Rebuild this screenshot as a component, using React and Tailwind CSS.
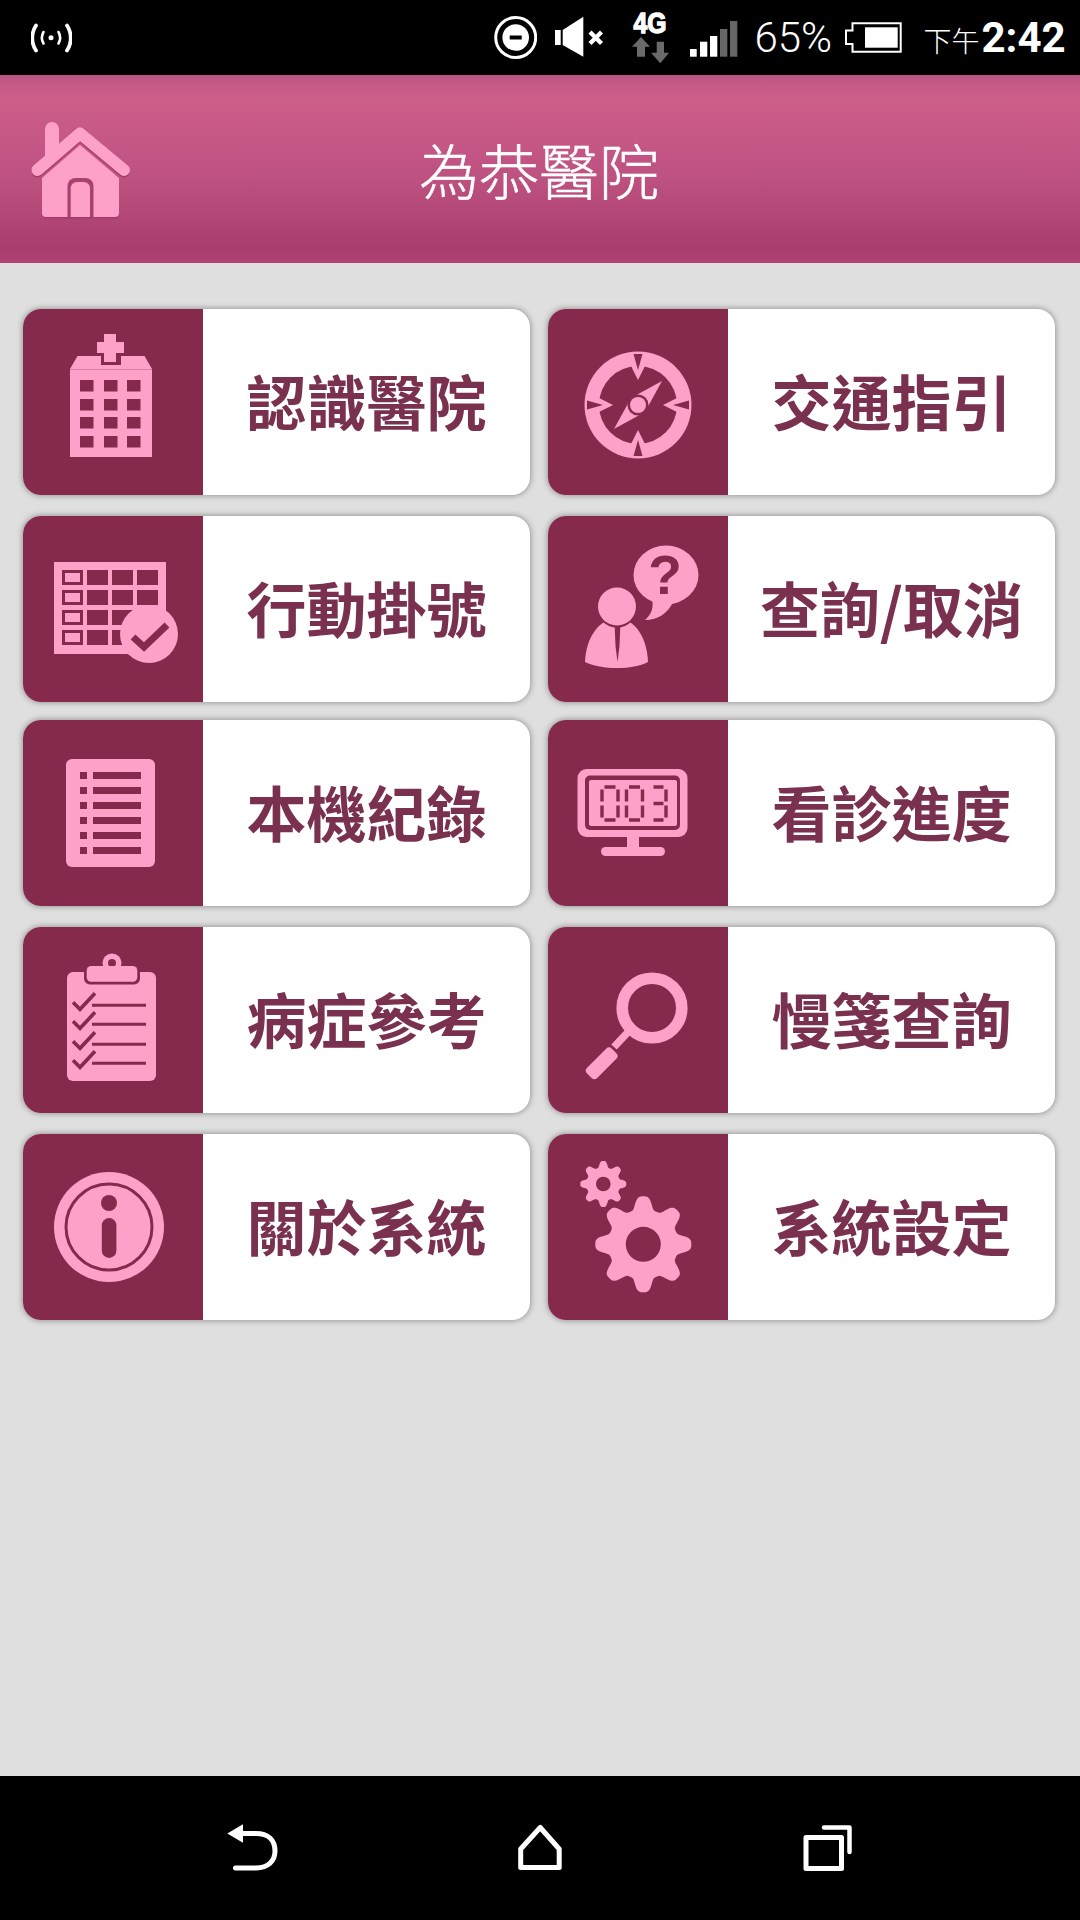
import React from "react";

const PINK = "#fda1c8";
const DARK = "#85294d";

function gearPath(cx, cy, R, hole) {
  const pts = [];
  const n = 240;
  for (let i = 0; i < n; i++) {
    const t = (i / n) * Math.PI * 2;
    const c = (1 + Math.cos(8 * t)) / 2;
    const b = c * c * (3 - 2 * c);
    const r = R * (0.73 + 0.27 * b);
    pts.push(`${(cx + r * Math.sin(t)).toFixed(2)} ${(cy - r * Math.cos(t)).toFixed(2)}`);
  }
  const h = `M${cx - hole} ${cy}a${hole} ${hole} 0 1 0 ${hole * 2} 0a${hole} ${hole} 0 1 0 ${-hole * 2} 0Z`;
  return `M${pts.join("L")}Z${h}`;
}

function Panel({ children }) {
  return (
    <svg viewBox="0 0 180 186" className="block h-[186px] w-[180px] shrink-0" aria-hidden="true">
      {children}
    </svg>
  );
}

function Hospital() {
  const xs = [57, 81, 104];
  const ys = [71, 90, 108, 127];
  return (
    <Panel>
      <rect x="47" y="60" width="82" height="88" fill={PINK} />
      <path d="M47 60 L54.5 47 H121.5 L129 60Z" fill={PINK} />
      <rect x="47" y="60" width="82" height="1" fill="#d67fa5" />
      <rect x="78" y="44" width="20" height="12" fill={DARK} />
      <path d="M81 25H93V33H101V44H93V53H81V44H74V33H81Z" fill={PINK} />
      {ys.map((y) => xs.map((x) => <rect key={`${x}-${y}`} x={x} y={y} width="13.5" height="11.5" fill={DARK} />))}
    </Panel>
  );
}

function Calendar() {
  const rows = [54, 74, 94, 114];
  return (
    <Panel>
      <rect x="31" y="46" width="112" height="92" fill={PINK} />
      {rows.map((y) => (
        <g key={y}>
          <rect x="40.5" y={y + 1.5} width="18" height="12" fill={PINK} stroke={DARK} strokeWidth="3" />
          {[64, 89, 114].map((x) => (
            <rect key={x} x={x} y={y} width="21" height="15" fill={DARK} />
          ))}
        </g>
      ))}
      <ellipse cx="126" cy="118" rx="29" ry="29" fill={PINK} />
      <path d="M110 121L121 131L144 109" fill="none" stroke={DARK} strokeWidth="7" />
    </Panel>
  );
}

function Compass() {
  return (
    <Panel>
      <circle cx="90" cy="96" r="53.5" fill={PINK} />
      <circle cx="90" cy="96" r="39" fill={DARK} />
      {[0, 90, 180, 270].map((a) => (
        <g key={a} transform={`rotate(${a} 90 96)`}>
          <path d="M81 53L99 53L90 71Z" fill={PINK} />
          <path d="M85.5 45L94.5 45L90 61Z" fill={DARK} />
        </g>
      ))}
      <path d="M114 72L97 103L66 120L83 89Z" fill={PINK} />
      <circle cx="90" cy="96" r="10.5" fill={DARK} />
      <circle cx="90" cy="96" r="8" fill={PINK} />
    </Panel>
  );
}

function PersonQuestion() {
  return (
    <Panel>
      <ellipse cx="118" cy="59" rx="32.5" ry="29.5" fill={PINK} />
      <path d="M104 82C106 92 103 99 97 104C110 104 120 97 125 86Z" fill={PINK} />
      <text x="117" y="78" textAnchor="middle" fontSize="55" fontWeight="700" fill={DARK} fontFamily="'Liberation Sans', sans-serif">?</text>
      <path d="M69 101C50 104 38 122 37 146C46 150 57 152 69 152C81 152 92 150 100 146C99 122 88 104 69 101Z" fill={PINK} />
      <path d="M66.4 104H72.6L71.5 130L69.5 146L67.5 130Z" fill={DARK} />
      <circle cx="69" cy="90.5" r="21" fill={DARK} />
      <circle cx="69" cy="90.5" r="19" fill={PINK} />
    </Panel>
  );
}

function ListDoc() {
  return (
    <Panel>
      <rect x="43" y="39" width="89" height="108" rx="6" fill={PINK} />
      {[52, 67, 82, 97, 112, 127].map((y) => (
        <g key={y} fill={DARK}>
          <rect x="57" y={y} width="7" height="7" />
          <rect x="70" y={y} width="48" height="7" />
        </g>
      ))}
    </Panel>
  );
}

function Monitor() {
  const seg = (x, y, w, h, on) => {
    const s = [];
    if (on.includes("t")) s.push(`M${x + 2.5} ${y}H${x + w - 2.5}`);
    if (on.includes("m")) s.push(`M${x + 2.5} ${y + h / 2}H${x + w - 2.5}`);
    if (on.includes("b")) s.push(`M${x + 2.5} ${y + h}H${x + w - 2.5}`);
    if (on.includes("a")) s.push(`M${x} ${y + 2.5}V${y + h / 2 - 2}`);
    if (on.includes("c")) s.push(`M${x} ${y + h / 2 + 2}V${y + h - 2.5}`);
    if (on.includes("d")) s.push(`M${x + w} ${y + 2.5}V${y + h / 2 - 2}`);
    if (on.includes("e")) s.push(`M${x + w} ${y + h / 2 + 2}V${y + h - 2.5}`);
    return s.join("");
  };
  return (
    <Panel>
      <rect x="29.5" y="49" width="110" height="68" rx="9" fill={PINK} />
      <rect x="37" y="55.5" width="95" height="54.5" rx="5" fill={DARK} />
      <rect x="41" y="60" width="88" height="46" rx="2" fill={PINK} />
      <path
        d={seg(54, 67, 16, 33, "tbacde") + seg(78.5, 67, 16, 33, "tbacde") + seg(103, 67, 15, 33, "tmbde")}
        fill="none"
        stroke={DARK}
        strokeWidth="3.4"
      />
      <rect x="79" y="117" width="12" height="11" fill={PINK} />
      <rect x="53" y="127" width="64" height="9" rx="4.5" fill={PINK} />
    </Panel>
  );
}

function Clipboard() {
  const lines = [78.3, 97.3, 117.3, 136.3];
  return (
    <Panel>
      <circle cx="89" cy="36" r="9.5" fill={PINK} />
      <circle cx="89" cy="36" r="4" fill={DARK} />
      <rect x="44" y="45" width="89" height="109" rx="6" fill={PINK} />
      <rect x="61" y="39" width="56" height="18.5" rx="6" fill={DARK} />
      <rect x="63.7" y="39" width="50.6" height="15.7" rx="4.5" fill={PINK} />
      {lines.map((y) => (
        <g key={y} fill="none" stroke={DARK}>
          <path d={`M69 ${y}H123`} strokeWidth="3" />
          <path d={`M50 ${y - 3}L57 ${y + 4}L72 ${y - 12}`} strokeWidth="3.6" />
        </g>
      ))}
    </Panel>
  );
}

function Magnifier() {
  return (
    <Panel>
      <circle cx="104" cy="81" r="29.8" fill="none" stroke={PINK} strokeWidth="11.6" />
      <path d="M82 103L66 120" stroke={PINK} strokeWidth="7.5" />
      <rect x="36.2" y="129.1" width="35" height="14.4" rx="4" fill={PINK} transform="rotate(-45 53.7 136.3)" />
    </Panel>
  );
}

function Info() {
  return (
    <Panel>
      <circle cx="86" cy="93" r="55" fill={PINK} />
      <circle cx="86" cy="93" r="43" fill="none" stroke={DARK} strokeWidth="3" />
      <ellipse cx="86" cy="69" rx="8" ry="8" fill={DARK} />
      <rect x="78.8" y="84" width="14.6" height="40" rx="7.3" fill={DARK} />
    </Panel>
  );
}

function Gears() {
  return (
    <Panel>
      <path d={gearPath(55.3, 50, 23, 7.3)} fill={PINK} fillRule="evenodd" />
      <path d={gearPath(95.3, 110.3, 48, 17.5)} fill={PINK} fillRule="evenodd" />
    </Panel>
  );
}

const rows = [
  { mt: "mt-0", items: [["認識醫院", Hospital], ["交通指引", Compass]] },
  { mt: "mt-[21px]", items: [["行動掛號", Calendar], ["查詢/取消", PersonQuestion]] },
  { mt: "mt-[18px]", items: [["本機紀錄", ListDoc], ["看診進度", Monitor]] },
  { mt: "mt-[21px]", items: [["病症參考", Clipboard], ["慢箋查詢", Magnifier]] },
  { mt: "mt-[21px]", items: [["關於系統", Info], ["系統設定", Gears]] },
];

function Card({ label, Icon }) {
  return (
    <div className="flex h-[186px] w-[507px] overflow-hidden rounded-[18px] bg-white shadow-[0_0_6px_rgba(0,0,0,0.42)]">
      <div className="h-[186px] w-[180px] shrink-0 bg-[#85294d]">
        <Icon />
      </div>
      <div className="flex flex-1 items-center justify-center pb-[5px] text-[60px] font-bold leading-none text-[#7a3150]">
        {label}
      </div>
    </div>
  );
}

function StatusBar() {
  return (
    <div className="flex h-[75px] shrink-0 items-center bg-black pl-[31px] text-white">
      <svg viewBox="31 0 41 75" className="h-[75px] w-[41px] shrink-0" fill="none" stroke="#fff" strokeLinecap="round">
        <circle cx="51" cy="37.7" r="2.5" fill="#fff" stroke="none" />
        <path d="M36 25.5C31 33 31 43 36 50.5M67 25.5C72 33 72 43 67 50.5" strokeWidth="3.8" />
        <path d="M43.5 32C41.5 35.5 41.5 40 43.5 43.5M58.5 32C60.5 35.5 60.5 40 58.5 43.5" strokeWidth="2.6" />
      </svg>
      <svg viewBox="494 0 43 75" className="ml-[422px] h-[75px] w-[43px] shrink-0">
        <circle cx="515.7" cy="37.5" r="20" fill="none" stroke="#fff" strokeWidth="3" />
        <circle cx="515.7" cy="37.5" r="13.3" fill="#fff" />
        <rect x="509.7" y="35.5" width="12" height="4" fill="#000" />
      </svg>
      <svg viewBox="554 0 51 75" className="ml-[17px] h-[75px] w-[51px] shrink-0">
        <rect x="555" y="30" width="5.7" height="15" fill="#fff" />
        <path d="M562.7 30L583.3 16.7V56.7L562.7 45Z" fill="#fff" />
        <path d="M590 32L601.5 43.5M601.5 32L590 43.5" stroke="#fff" strokeWidth="4.4" />
      </svg>
      <svg viewBox="628 0 46 75" className="ml-[23px] h-[75px] w-[46px] shrink-0">
        <text x="633.5" y="33" fontSize="29" fontWeight="700" fill="#fff" stroke="#fff" strokeWidth="1.4" textLength="33" lengthAdjust="spacingAndGlyphs" fontFamily="'Liberation Sans', sans-serif">4G</text>
        <path d="M641 37L650 46.7H645V56.7H637V46.7H632Z" fill="#6a6a6a" />
        <path d="M656.7 41.7H664V52.7H669L660.3 63.3L651 52.7H656.7Z" fill="#6a6a6a" />
      </svg>
      <svg viewBox="690 0 47.5 75" className="ml-[16px] h-[75px] w-[47.5px] shrink-0">
        <rect x="690" y="49" width="6.7" height="7.7" fill="#fff" />
        <rect x="700" y="41.7" width="7.3" height="15" fill="#fff" />
        <rect x="710" y="36" width="7.3" height="20.7" fill="#fff" />
        <rect x="720" y="29" width="7.3" height="27.7" fill="#666" />
        <rect x="730" y="21" width="7.3" height="35.7" fill="#666" />
      </svg>
      <span className="ml-[17px] w-[78px] shrink-0 whitespace-nowrap font-['Roboto',sans-serif] text-[42px] font-light leading-none">65%</span>
      <svg viewBox="845 0 57 75" className="ml-[12px] h-[75px] w-[57px] shrink-0">
        <path d="M852.5 23.3H900.7V51.7H852.5V44H846V30.5H852.5Z" fill="none" stroke="#fff" strokeWidth="2" />
        <rect x="865" y="27.3" width="32.7" height="20.4" fill="#fff" />
      </svg>
      <span className="ml-[22px] mt-[4px] shrink-0 whitespace-nowrap font-['Noto_Sans_CJK_TC',sans-serif] text-[28px] font-light leading-none">下午</span>
      <span className="ml-[2px] shrink-0 whitespace-nowrap font-['Roboto',sans-serif] text-[42px] font-bold leading-none">2:42</span>
    </div>
  );
}

function Header() {
  return (
    <div className="grid h-[188px] shrink-0 grid-cols-[160px_1fr_160px] items-center bg-[linear-gradient(to_bottom,#b65580_0%,#c75b87_6%,#cd5e8a_15%,#bd5180_55%,#a93e6e_92%,#b04474_100%)]">
      <svg viewBox="0 75 160 188" className="h-[188px] w-[160px]" aria-hidden="true">
        <path d="M37.5 170L80 133.5L124 170" fill="none" stroke="#a03a68" strokeWidth="12" strokeLinecap="round" strokeLinejoin="round" transform="translate(0 1.5)" />
        <path d="M52 129V155" stroke={PINK} strokeWidth="14" strokeLinecap="round" />
        <path d="M80 145L43 178V213a4 4 0 0 0 4 4H115a4 4 0 0 0 4-4V178Z" fill="#a03a68" transform="translate(0 1.5)" />
        <path d="M80 145L42 178V213a4 4 0 0 0 4 4H115a4 4 0 0 0 4-4V178Z" fill={PINK} />
        <path d="M37.5 170L80 133.5L124 170" fill="none" stroke={PINK} strokeWidth="12" strokeLinecap="round" strokeLinejoin="round" />
        <path d="M67.5 217V186a8 8 0 0 1 8-8H85.5a8 8 0 0 1 8 8V217Z" fill="#a84070" />
        <path d="M70.7 217V188a6 6 0 0 1 6-6H84a6 6 0 0 1 6 6V217Z" fill={PINK} />
      </svg>
      <div className="pr-[2px] text-center font-['Noto_Sans_CJK_TC',sans-serif] text-[60px] font-light leading-none text-white [-webkit-text-stroke:0.5px_white]">為恭醫院</div>
      <div />
    </div>
  );
}

function NavBar() {
  return (
    <div className="flex h-[144px] shrink-0 justify-center gap-[205px] bg-black">
      <svg viewBox="215 1776 80 144" className="h-[144px] w-[80px]" fill="none" stroke="#fff" strokeWidth="5">
        <path d="M243 1824.3V1842.7L227.3 1833.5Z" fill="#fff" stroke="none" />
        <path d="M242 1833.5H256C268 1833.5 275 1840 275 1851C275 1861 268 1868 256 1868H235.5" strokeLinecap="round" />
      </svg>
      <svg viewBox="500 1776 80 144" className="h-[144px] w-[80px]" fill="none" stroke="#fff" strokeWidth="5" strokeLinejoin="round">
        <path d="M540 1828.5L520.5 1850V1868.5H559V1850Z" transform="translate(0.2 -1)" />
      </svg>
      <svg viewBox="785 1776 80 144" className="h-[144px] w-[80px]" fill="none" stroke="#fff" strokeWidth="5" strokeLinejoin="round">
        <rect x="806" y="1837.5" width="35.5" height="31" />
        <path d="M824 1827.5H849.5V1852" strokeLinecap="round" strokeWidth="4.5" />
      </svg>
    </div>
  );
}

export default function App() {
  return (
    <div className="flex h-[1920px] w-[1080px] flex-col overflow-hidden bg-[#dfdfdf] font-['Noto_Sans_CJK_TC','Noto_Sans',sans-serif]">
      <StatusBar />
      <Header />
      <main className="flex-1 pl-[23px] pt-[46px]">
        {rows.map((row) => (
          <div key={row.items[0][0]} className={`flex gap-[18px] ${row.mt}`}>
            {row.items.map(([label, Icon]) => (
              <Card key={label} label={label} Icon={Icon} />
            ))}
          </div>
        ))}
      </main>
      <NavBar />
    </div>
  );
}
